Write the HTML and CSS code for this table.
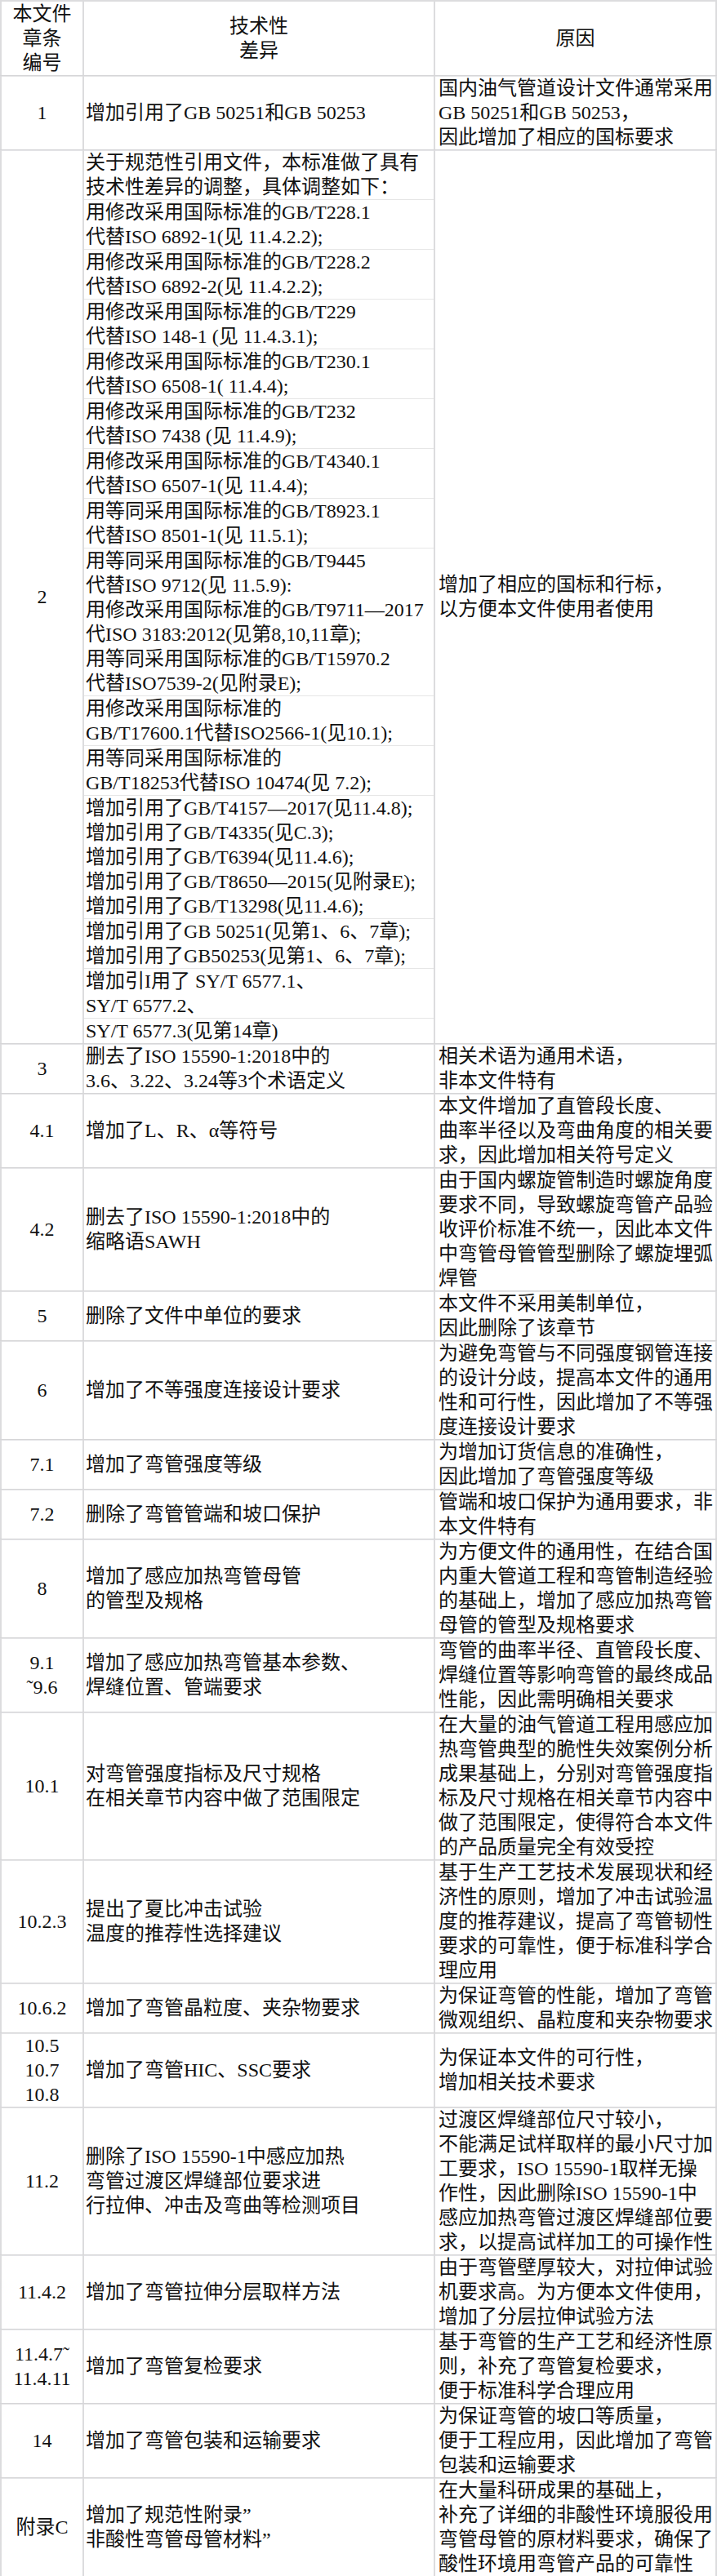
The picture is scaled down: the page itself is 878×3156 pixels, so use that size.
FILE: index.html
```html
<!DOCTYPE html>
<html lang="zh-CN">
<head>
<meta charset="utf-8">
<title>技术性差异</title>
<link rel="stylesheet" href="styles.css">
</head>
<body>
<div class="table">
  <div class="row head">
    <div class="cell c1">本文件<br>章条<br>编号</div>
    <div class="cell c2 center">技术性<br>差异</div>
    <div class="cell c3 center">原因</div>
  </div>
  <div class="row">
    <div class="cell c1">1</div>
    <div class="cell c2">增加引用了GB 50251和GB 50253</div>
    <div class="cell c3">国内油气管道设计文件通常采用<br>GB 50251和GB 50253，<br>因此增加了相应的国标要求</div>
  </div>
  <div class="row">
    <div class="cell c1">2</div>
    <div class="cell c2 stack">
      <div class="sub">关于规范性引用文件，本标准做了具有<br>技术性差异的调整，具体调整如下：</div>
      <div class="sub">用修改采用国际标准的GB/T228.1<br>代替ISO 6892-1(见 11.4.2.2);</div>
      <div class="sub">用修改采用国际标准的GB/T228.2<br>代替ISO 6892-2(见 11.4.2.2);</div>
      <div class="sub">用修改采用国际标准的GB/T229<br>代替ISO 148-1 (见 11.4.3.1);</div>
      <div class="sub">用修改采用国际标准的GB/T230.1<br>代替ISO 6508-1( 11.4.4);</div>
      <div class="sub">用修改采用国际标准的GB/T232<br>代替ISO 7438 (见 11.4.9);</div>
      <div class="sub">用修改采用国际标准的GB/T4340.1<br>代替ISO 6507-1(见 11.4.4);</div>
      <div class="sub">用等同采用国际标准的GB/T8923.1<br>代替ISO 8501-1(见 11.5.1);</div>
      <div class="sub">用等同采用国际标准的GB/T9445<br>代替ISO 9712(见 11.5.9):<br>用修改采用国际标准的GB/T9711—2017<br>代ISO 3183:2012(见第8,10,11章);<br>用等同采用国际标准的GB/T15970.2<br>代替ISO7539-2(见附录E);</div>
      <div class="sub">用修改采用国际标准的<br>GB/T17600.1代替ISO2566-1(见10.1);</div>
      <div class="sub">用等同采用国际标准的<br>GB/T18253代替ISO 10474(见 7.2);</div>
      <div class="sub">增加引用了GB/T4157—2017(见11.4.8);<br>增加引用了GB/T4335(见C.3);<br>增加引用了GB/T6394(见11.4.6);<br>增加引用了GB/T8650—2015(见附录E);<br>增加引用了GB/T13298(见11.4.6);</div>
      <div class="sub">增加引用了GB 50251(见第1、6、7章);<br>增加引用了GB50253(见第1、6、7章);</div>
      <div class="sub">增加引I用了 SY/T 6577.1、<br>SY/T 6577.2、</div>
      <div class="sub">SY/T 6577.3(见第14章)</div>
    </div>
    <div class="cell c3">增加了相应的国标和行标，<br>以方便本文件使用者使用</div>
  </div>
  <div class="row">
    <div class="cell c1">3</div>
    <div class="cell c2">删去了ISO 15590-1:2018中的<br>3.6、3.22、3.24等3个术语定义</div>
    <div class="cell c3">相关术语为通用术语，<br>非本文件特有</div>
  </div>
  <div class="row">
    <div class="cell c1">4.1</div>
    <div class="cell c2">增加了L、R、α等符号</div>
    <div class="cell c3">本文件增加了直管段长度、<br>曲率半径以及弯曲角度的相关要<br>求，因此增加相关符号定义</div>
  </div>
  <div class="row">
    <div class="cell c1">4.2</div>
    <div class="cell c2">删去了ISO 15590-1:2018中的<br>缩略语SAWH</div>
    <div class="cell c3">由于国内螺旋管制造时螺旋角度<br>要求不同，导致螺旋弯管产品验<br>收评价标准不统一，因此本文件<br>中弯管母管管型删除了螺旋埋弧<br>焊管</div>
  </div>
  <div class="row">
    <div class="cell c1">5</div>
    <div class="cell c2">删除了文件中单位的要求</div>
    <div class="cell c3">本文件不采用美制单位，<br>因此删除了该章节</div>
  </div>
  <div class="row">
    <div class="cell c1">6</div>
    <div class="cell c2">增加了不等强度连接设计要求</div>
    <div class="cell c3">为避免弯管与不同强度钢管连接<br>的设计分歧，提高本文件的通用<br>性和可行性，因此增加了不等强<br>度连接设计要求</div>
  </div>
  <div class="row">
    <div class="cell c1">7.1</div>
    <div class="cell c2">增加了弯管强度等级</div>
    <div class="cell c3">为增加订货信息的准确性，<br>因此增加了弯管强度等级</div>
  </div>
  <div class="row">
    <div class="cell c1">7.2</div>
    <div class="cell c2">删除了弯管管端和坡口保护</div>
    <div class="cell c3">管端和坡口保护为通用要求，非<br>本文件特有</div>
  </div>
  <div class="row">
    <div class="cell c1">8</div>
    <div class="cell c2">增加了感应加热弯管母管<br>的管型及规格</div>
    <div class="cell c3">为方便文件的通用性，在结合国<br>内重大管道工程和弯管制造经验<br>的基础上，增加了感应加热弯管<br>母管的管型及规格要求</div>
  </div>
  <div class="row">
    <div class="cell c1">9.1<br>˜9.6</div>
    <div class="cell c2">增加了感应加热弯管基本参数、<br>焊缝位置、管端要求</div>
    <div class="cell c3">弯管的曲率半径、直管段长度、<br>焊缝位置等影响弯管的最终成品<br>性能，因此需明确相关要求</div>
  </div>
  <div class="row">
    <div class="cell c1">10.1</div>
    <div class="cell c2">对弯管强度指标及尺寸规格<br>在相关章节内容中做了范围限定</div>
    <div class="cell c3">在大量的油气管道工程用感应加<br>热弯管典型的脆性失效案例分析<br>成果基础上，分别对弯管强度指<br>标及尺寸规格在相关章节内容中<br>做了范围限定，使得符合本文件<br>的产品质量完全有效受控</div>
  </div>
  <div class="row">
    <div class="cell c1">10.2.3</div>
    <div class="cell c2">提出了夏比冲击试验<br>温度的推荐性选择建议</div>
    <div class="cell c3">基于生产工艺技术发展现状和经<br>济性的原则，增加了冲击试验温<br>度的推荐建议，提高了弯管韧性<br>要求的可靠性，便于标准科学合<br>理应用</div>
  </div>
  <div class="row">
    <div class="cell c1">10.6.2</div>
    <div class="cell c2">增加了弯管晶粒度、夹杂物要求</div>
    <div class="cell c3">为保证弯管的性能，增加了弯管<br>微观组织、晶粒度和夹杂物要求</div>
  </div>
  <div class="row">
    <div class="cell c1">10.5<br>10.7<br>10.8</div>
    <div class="cell c2">增加了弯管HIC、SSC要求</div>
    <div class="cell c3">为保证本文件的可行性，<br>增加相关技术要求</div>
  </div>
  <div class="row">
    <div class="cell c1">11.2</div>
    <div class="cell c2">删除了ISO 15590-1中感应加热<br>弯管过渡区焊缝部位要求进<br>行拉伸、冲击及弯曲等检测项目</div>
    <div class="cell c3">过渡区焊缝部位尺寸较小，<br>不能满足试样取样的最小尺寸加<br>工要求，ISO 15590-1取样无操<br>作性，因此删除ISO 15590-1中<br>感应加热弯管过渡区焊缝部位要<br>求，以提高试样加工的可操作性</div>
  </div>
  <div class="row">
    <div class="cell c1">11.4.2</div>
    <div class="cell c2">增加了弯管拉伸分层取样方法</div>
    <div class="cell c3">由于弯管壁厚较大，对拉伸试验<br>机要求高。为方便本文件使用，<br>增加了分层拉伸试验方法</div>
  </div>
  <div class="row">
    <div class="cell c1">11.4.7˜<br>11.4.11</div>
    <div class="cell c2">增加了弯管复检要求</div>
    <div class="cell c3">基于弯管的生产工艺和经济性原<br>则，补充了弯管复检要求，<br>便于标准科学合理应用</div>
  </div>
  <div class="row">
    <div class="cell c1">14</div>
    <div class="cell c2">增加了弯管包装和运输要求</div>
    <div class="cell c3">为保证弯管的坡口等质量，<br>便于工程应用，因此增加了弯管<br>包装和运输要求</div>
  </div>
  <div class="row">
    <div class="cell c1">附录C</div>
    <div class="cell c2">增加了规范性附录”<br>非酸性弯管母管材料”</div>
    <div class="cell c3">在大量科研成果的基础上，<br>补充了详细的非酸性环境服役用<br>弯管母管的原材料要求，确保了<br>酸性环境用弯管产品的可靠性</div>
  </div>
</div>
</body>
</html>
```

FILE: styles.css
```css
html, body {
  margin: 0;
  padding: 0;
  background: #ffffff;
}

body {
  font-family: "Liberation Serif", "Noto Sans CJK SC", serif;
  font-size: 24px;
  line-height: 30px;
  color: #111111;
}

.table {
  width: 878px;
  border-top: 2px solid #dcdcde;
}

.row {
  display: grid;
  grid-template-columns: 101px 430px 347px;
  border-bottom: 1px solid #d6d6d8;
  box-shadow: 0 1px 0 #e4e4e6;
}

.cell {
  box-sizing: border-box;
  border-left: 2px solid #dcdcde;
  display: flex;
  flex-direction: column;
  justify-content: center;
  white-space: nowrap;
  overflow: hidden;
}

.c1 {
  align-items: center;
  text-align: center;
}

.c2 {
  padding-left: 2px;
}

.c3 {
  padding-left: 4px;
  border-right: 2px solid #dcdcde;
}

.center {
  align-items: center;
  text-align: center;
  padding-left: 0;
}

.stack {
  padding-left: 0;
  justify-content: flex-start;
}

.sub {
  padding-left: 2px;
  border-bottom: 1px solid #e6e6e6;
}

.sub:last-child {
  border-bottom: none;
}
```
